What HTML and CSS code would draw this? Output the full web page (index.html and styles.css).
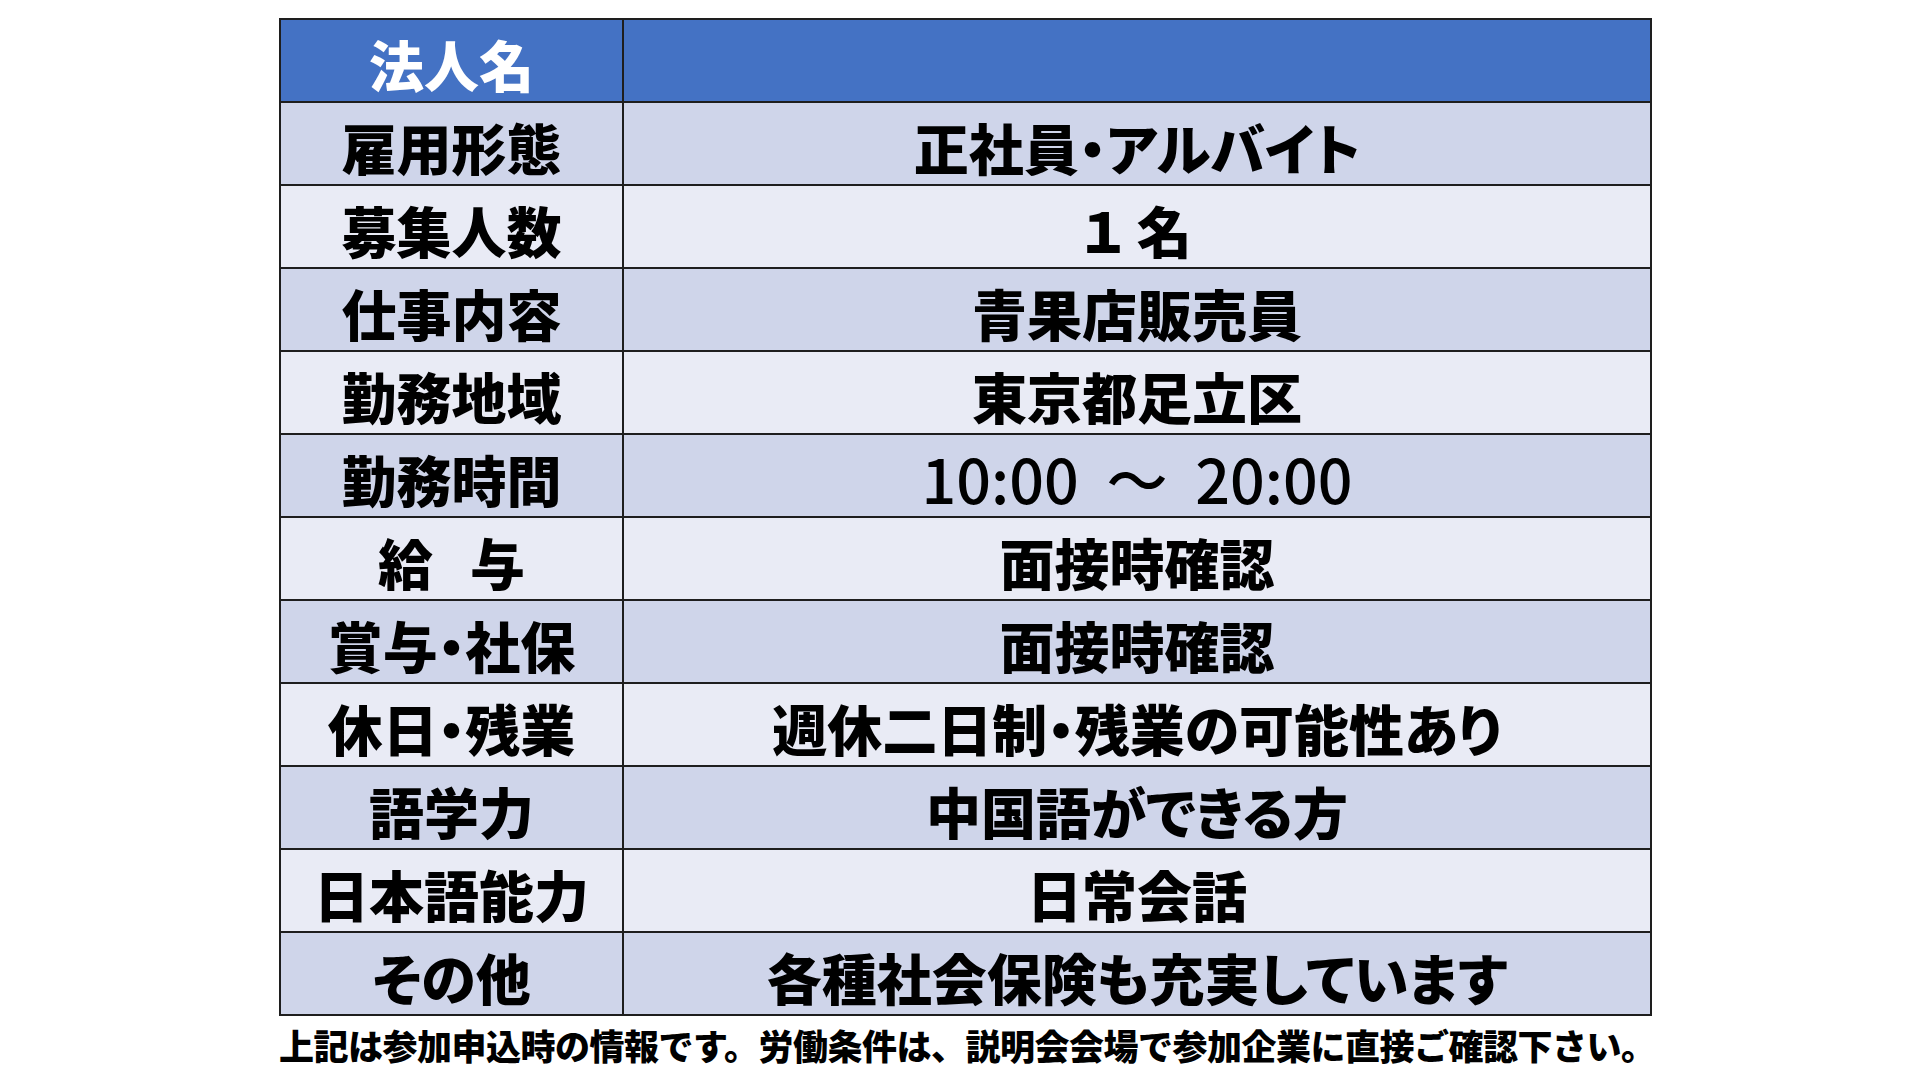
FILE: index.html
```html
<!DOCTYPE html>
<html lang="ja">
<head>
<meta charset="utf-8">
<title>求人情報</title>
<link rel="stylesheet" href="styles.css">
</head>
<body>
<main class="sheet">
  <table class="job">
    <tbody>
      <tr class="head"><th>法人名</th><td></td></tr>
      <tr class="odd"><th>雇用形態</th><td>正社員・アルバイト</td></tr>
      <tr class="even"><th>募集人数</th><td>１ 名</td></tr>
      <tr class="odd"><th>仕事内容</th><td>青果店販売員</td></tr>
      <tr class="even"><th>勤務地域</th><td>東京都足立区</td></tr>
      <tr class="odd"><th>勤務時間</th><td class="time">10:00 ～ 20:00</td></tr>
      <tr class="even"><th>給<span class="gap">　</span>与</th><td>面接時確認</td></tr>
      <tr class="odd"><th>賞与・社保</th><td>面接時確認</td></tr>
      <tr class="even"><th>休日・残業</th><td>週休二日制・残業の可能性あり</td></tr>
      <tr class="odd"><th>語学力</th><td>中国語ができる方</td></tr>
      <tr class="even"><th>日本語能力</th><td>日常会話</td></tr>
      <tr class="odd"><th>その他</th><td>各種社会保険も充実しています</td></tr>
    </tbody>
  </table>
  <p class="note">上記は参加申込時の情報です。労働条件は、説明会会場で参加企業に直接ご確認下さい。</p>
</main>
</body>
</html>
```

FILE: styles.css
```css
html, body {
  margin: 0;
  padding: 0;
  background: #ffffff;
}

body {
  font-family: "Noto Sans CJK JP", "Noto Sans", sans-serif;
  color: #000000;
}

.sheet {
  width: 1373px;
  margin-left: 279px;
  padding-top: 18px;
}

.job {
  width: 1373px;
  border-collapse: collapse;
  table-layout: fixed;
}

.job tr {
  height: 83px;
}

.job th,
.job td {
  border: 2px solid #1e1e1e;
  padding: 6px 0 0 0;
  text-align: center;
  vertical-align: middle;
  font-size: 55px;
  font-weight: 900;
  line-height: 1;
  font-feature-settings: "palt";
  white-space: nowrap;
}

.job th {
  width: 341px;
}

.head th,
.head td {
  background: #4472c4;
  color: #ffffff;
}

.odd th,
.odd td {
  background: #cfd5ea;
}

.even th,
.even td {
  background: #e9ebf5;
}

.gap {
  letter-spacing: -18px;
}

.job td.time {
  font-weight: 500;
  font-size: 61px;
  word-spacing: 14px;
  font-feature-settings: normal;
  padding-top: 4px;
}

.note {
  margin: 10px 0 0 0;
  font-size: 35px;
  font-weight: 900;
  line-height: 1.1;
  white-space: nowrap;
  letter-spacing: -0.5px;
}
```
